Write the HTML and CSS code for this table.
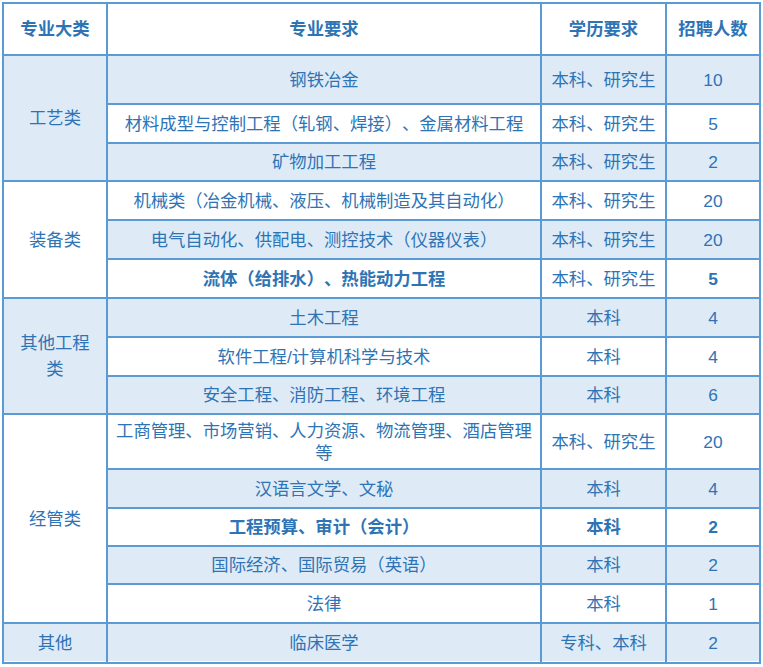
FILE: index.html
```html
<!DOCTYPE html>
<html lang="zh-CN">
<head>
<meta charset="utf-8">
<title>招聘专业</title>
<link rel="stylesheet" href="styles.css">
</head>
<body>
<div class="wrap">
<table class="jobs">
  <colgroup>
    <col class="c1"><col class="c2"><col class="c3"><col class="c4">
  </colgroup>
  <thead>
    <tr class="h52">
      <th>专业大类</th><th>专业要求</th><th>学历要求</th><th>招聘人数</th>
    </tr>
  </thead>
  <tbody>
    <tr class="h49 blue">
      <td rowspan="3" class="grp blue">工艺类</td>
      <td>钢铁冶金</td><td>本科、研究生</td><td>10</td>
    </tr>
    <tr class="h39">
      <td>材料成型与控制工程（轧钢、焊接）、金属材料工程</td><td>本科、研究生</td><td>5</td>
    </tr>
    <tr class="h38 blue">
      <td>矿物加工工程</td><td>本科、研究生</td><td>2</td>
    </tr>
    <tr class="h39">
      <td rowspan="3" class="grp">装备类</td>
      <td>机械类（冶金机械、液压、机械制造及其自动化）</td><td>本科、研究生</td><td>20</td>
    </tr>
    <tr class="h39 blue">
      <td>电气自动化、供配电、测控技术（仪器仪表）</td><td>本科、研究生</td><td>20</td>
    </tr>
    <tr class="h39">
      <td class="b">流体（给排水）、热能动力工程</td><td>本科、研究生</td><td class="b">5</td>
    </tr>
    <tr class="h39 blue">
      <td rowspan="3" class="grp tall blue">其他工程<br>类</td>
      <td>土木工程</td><td>本科</td><td>4</td>
    </tr>
    <tr class="h39">
      <td>软件工程/计算机科学与技术</td><td>本科</td><td>4</td>
    </tr>
    <tr class="h38 blue">
      <td>安全工程、消防工程、环境工程</td><td>本科</td><td>6</td>
    </tr>
    <tr class="h55">
      <td rowspan="5" class="grp">经管类</td>
      <td class="multi">工商管理、市场营销、人力资源、物流管理、酒店管理<br>等</td><td>本科、研究生</td><td>20</td>
    </tr>
    <tr class="h39 blue">
      <td>汉语言文学、文秘</td><td>本科</td><td>4</td>
    </tr>
    <tr class="h38">
      <td class="b">工程预算、审计（会计）</td><td class="b">本科</td><td class="b">2</td>
    </tr>
    <tr class="h38 blue">
      <td>国际经济、国际贸易（英语）</td><td>本科</td><td>2</td>
    </tr>
    <tr class="h39">
      <td>法律</td><td>本科</td><td>1</td>
    </tr>
    <tr class="h40 blue last">
      <td class="grp blue">其他</td>
      <td>临床医学</td><td>专科、本科</td><td>2</td>
    </tr>
  </tbody>
</table>
</div>
</body>
</html>
```

FILE: styles.css
```css
html, body {
  margin: 0;
  padding: 0;
  background: #ffffff;
}

.wrap {
  padding: 2px;
}

.jobs {
  border-collapse: collapse;
  table-layout: fixed;
  width: 759px;
  font-family: "Liberation Sans", "Noto Sans CJK SC", sans-serif;
  font-size: 17.33px;
  color: #2e74b5;
  text-spacing-trim: space-all;
}

.c1 { width: 104px; }
.c2 { width: 434px; }
.c3 { width: 125px; }
.c4 { width: 94px; }

.jobs th,
.jobs td {
  border: 2px solid #5b9bd5;
  padding: 0 4px;
  text-align: center;
  vertical-align: middle;
  line-height: 22px;
  white-space: nowrap;
  background: #ffffff;
}

.jobs th {
  font-weight: bold;
}

.jobs tr.blue td {
  background: #deebf7;
}

.jobs tr td.grp {
  background: #ffffff;
}

.jobs tr td.grp.blue {
  background: #deebf7;
}

.jobs td.tall {
  line-height: 26px;
}

.jobs td.b {
  font-weight: bold;
}

.jobs tr.last td {
  box-shadow: inset 0 -1px 0 #ffffff;
}

.h52 { height: 52px; }
.h49 { height: 49px; }
.h39 { height: 39px; }
.h38 { height: 38px; }
.h40 { height: 40px; }
.h55 { height: 55px; }
```
